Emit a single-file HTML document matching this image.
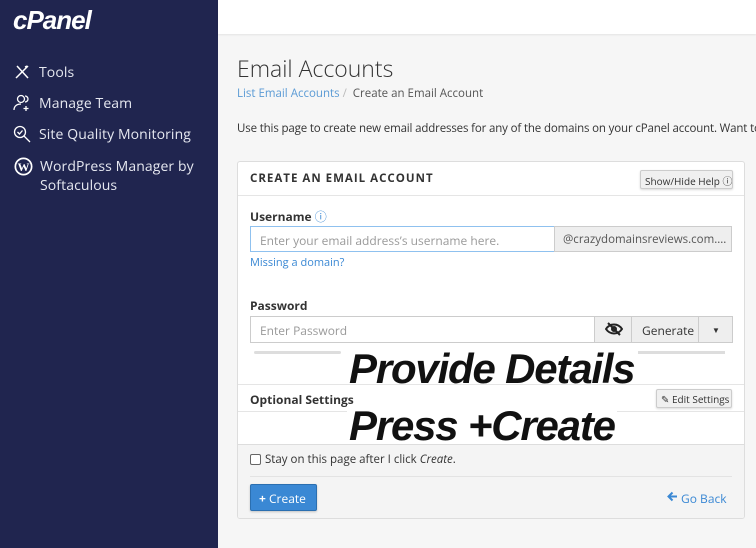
<!DOCTYPE html>
<html><head><meta charset="utf-8"><style>
*{box-sizing:border-box;margin:0;padding:0}
body{width:756px;height:548px;overflow:hidden;position:relative;background:#f6f6f6;font-family:"Open Sans","Liberation Sans",sans-serif;color:#333}
.a{position:absolute;white-space:nowrap}
#side{left:0;top:0;width:218px;height:548px;background:#20254f;color:#e6e8f0}
.nav{font-size:14px;letter-spacing:.1px}
.top{left:218px;top:0;width:538px;height:34px;background:#fff;box-shadow:0 1px 2px rgba(0,0,0,.08)}
.card{left:237px;top:161px;width:508px;height:358px;background:#fff;border:1px solid #ddd;border-radius:3px;overflow:hidden}
.btn{background:#f0f0f0;border:1px solid #ccc;border-radius:2px;font-size:10px;color:#333;box-shadow:0 1px 2px rgba(0,0,0,.15);overflow:hidden}
.lbl{font-size:12px;font-weight:bold;color:#333}
.inp{border:1px solid #ccc;background:#fff;font-size:12px;color:#999;padding:5px 9px;overflow:hidden}
.big{font-family:"Liberation Sans",sans-serif;font-style:italic;font-weight:bold;font-size:42px;color:#111;letter-spacing:-1.2px;background:#fff}
</style></head><body>
<div id="side" class="a">
 <div class="a" style="left:13px;top:5px;font:italic bold 26px 'Liberation Sans',sans-serif;color:#fff;letter-spacing:-1px">cPanel</div>
 <svg class="a" style="left:14px;top:64px" width="16" height="16" viewBox="0 0 16 16" fill="none" stroke="#fff" stroke-width="1.5"><path d="M2 14L14 2M3 2l11 12M11 3l2-1"/></svg>
 <div class="a nav" style="left:39px;top:63px">Tools</div>
 <svg class="a" style="left:13px;top:94px" width="18" height="18" viewBox="0 0 18 18" fill="none" stroke="#fff" stroke-width="1.3"><circle cx="8" cy="5" r="3.5"/><path d="M1 16c0-4 3-6 7-6M13 12v5M10.5 14.5h5M12 2a3 3 0 010 6"/></svg>
 <div class="a nav" style="left:39px;top:94px">Manage Team</div>
 <svg class="a" style="left:13px;top:125px" width="19" height="19" viewBox="0 0 19 19" fill="none" stroke="#fff" stroke-width="1.3"><circle cx="7" cy="7" r="5.5"/><path d="M4.5 7l2 2 3-3.5M11 11l6 6"/></svg>
 <div class="a nav" style="left:39px;top:125px">Site Quality Monitoring</div>
 <svg class="a" style="left:14px;top:157px" width="19" height="19" viewBox="0 0 19 19"><circle cx="9.5" cy="9.5" r="9" fill="#fff"/><circle cx="9.5" cy="9.5" r="7.3" fill="#20254f"/><text x="9.5" y="14" text-anchor="middle" font-family="Liberation Serif" font-weight="bold" font-size="12" fill="#fff">W</text></svg>
 <div class="a nav" style="left:40px;top:157px;line-height:19px">WordPress Manager by<br>Softaculous</div>
</div>
<div class="a top"></div>
<div class="a" style="left:237px;top:52px;font-size:23px;font-weight:300;color:#333">Email Accounts</div>
<div class="a" style="left:237px;top:86px;font-size:11.5px;color:#555"><span style="color:#5b9bd5">List Email Accounts</span> <span style="color:#bbb">/</span> &nbsp;Create an Email Account</div>
<div class="a" style="left:237px;top:121px;font-size:11.5px;color:#333;letter-spacing:-0.15px">Use this page to create new email addresses for any of the domains on your cPanel account. Want to</div>
<div class="a card">
 <div class="a" style="left:12px;top:9px;font-size:11.5px;font-weight:bold;letter-spacing:1px;color:#333">CREATE AN EMAIL ACCOUNT</div>
 <div class="a btn" style="left:402px;top:8px;width:93px;height:19px;padding:2px 4px">Show/Hide Help ⓘ</div>
 <div class="a" style="left:0;top:33px;width:100%;border-top:1px solid #e5e5e5"></div>
 <div class="a lbl" style="left:12px;top:46px">Username <span style="color:#3a88d4;font-weight:normal">ⓘ</span></div>
 <div class="a inp" style="left:12px;top:64px;width:305px;height:26px;border-color:#8fc1ef">Enter your email address’s username here.</div>
 <div class="a inp" style="left:316px;top:64px;width:178px;height:26px;background:#eee;color:#555;font-size:11.5px;padding:5px 8px">@crazydomainsreviews.com....</div>
 <div class="a" style="left:12px;top:93px;font-size:11px;color:#3a88d4">Missing a domain?</div>
 <div class="a lbl" style="left:12px;top:135px">Password</div>
 <div class="a inp" style="left:12px;top:154px;width:345px;height:27px">Enter Password</div>
 <div class="a inp" style="left:356px;top:154px;width:38px;height:27px;background:#eee;padding:5px 10px"><svg width="18" height="14" viewBox="0 0 18 14" fill="none" stroke="#222" stroke-width="2"><path d="M1 7c4-6 12-6 16 0-4 6-12 6-16 0z"/><circle cx="9" cy="7" r="2"/><path d="M3 1l12 12"/></svg></div>
 <div class="a inp" style="left:393px;top:154px;width:68px;height:27px;background:#eee;color:#333;padding:5px 10px">Generate</div>
 <div class="a inp" style="left:460px;top:154px;width:35px;height:27px;background:#eee;color:#333;font-size:8px;padding:8px 13px">▼</div>
 <div class="a" style="left:16px;top:189px;width:87px;height:3px;background:#ddd;border-radius:2px"></div>
 <div class="a" style="left:112px;top:189px;width:87px;height:3px;background:#ddd"></div>
 <div class="a" style="left:209px;top:189px;width:86px;height:3px;background:#ddd"></div>
 <div class="a" style="left:304px;top:189px;width:87px;height:3px;background:#ddd"></div>
 <div class="a" style="left:400px;top:189px;width:87px;height:3px;background:#ddd"></div>
 <div class="a" style="left:0;top:222px;width:100%;border-top:1px solid #e5e5e5"></div>
 <div class="a lbl" style="left:12px;top:229px">Optional Settings</div>
 <div class="a btn" style="left:418px;top:227px;width:76px;height:19px;padding:2px 4px">✎ Edit Settings</div>
 <div class="a" style="left:0;top:249px;width:100%;border-top:1px solid #e5e5e5"></div>
 <div class="a" style="left:0;top:282px;width:100%;height:80px;background:#f4f4f4;border-top:1px solid #ddd"></div>
 <div class="a big" style="left:109px;top:185px;padding:0 2px;line-height:44px;height:37px;overflow:visible">Provide Details</div>
 <div class="a big" style="left:109px;top:243px;padding:0 2px;line-height:42px;height:39px;overflow:hidden">Press +Create</div>
 <div class="a" style="left:12px;top:292px;width:11px;height:11px;border:1px solid #666;border-radius:2px;background:#fff"></div>
 <div class="a" style="left:27px;top:290px;font-size:11.5px;color:#333">Stay on this page after I click <i>Create</i>.</div>
 <div class="a" style="left:12px;top:314px;width:482px;border-top:1px solid #e3e3e3"></div>
 <div class="a" style="left:12px;top:322px;width:67px;height:27px;background:#3a88d4;border:1px solid #2b6fb0;border-radius:2px;color:#fff;font-size:12px;padding:5px 8px;box-shadow:0 1px 2px rgba(0,0,0,.2)"><b>+</b> Create</div>
 <svg class="a" style="left:429px;top:329px" width="11" height="11" viewBox="0 0 11 11" fill="none" stroke="#3a88d4" stroke-width="2"><path d="M10 5.5H2M5.5 1.5L1.5 5.5l4 4"/></svg>
 <div class="a" style="left:443px;top:328px;font-size:12px;color:#3a88d4">Go Back</div>
</div>
</body></html>
